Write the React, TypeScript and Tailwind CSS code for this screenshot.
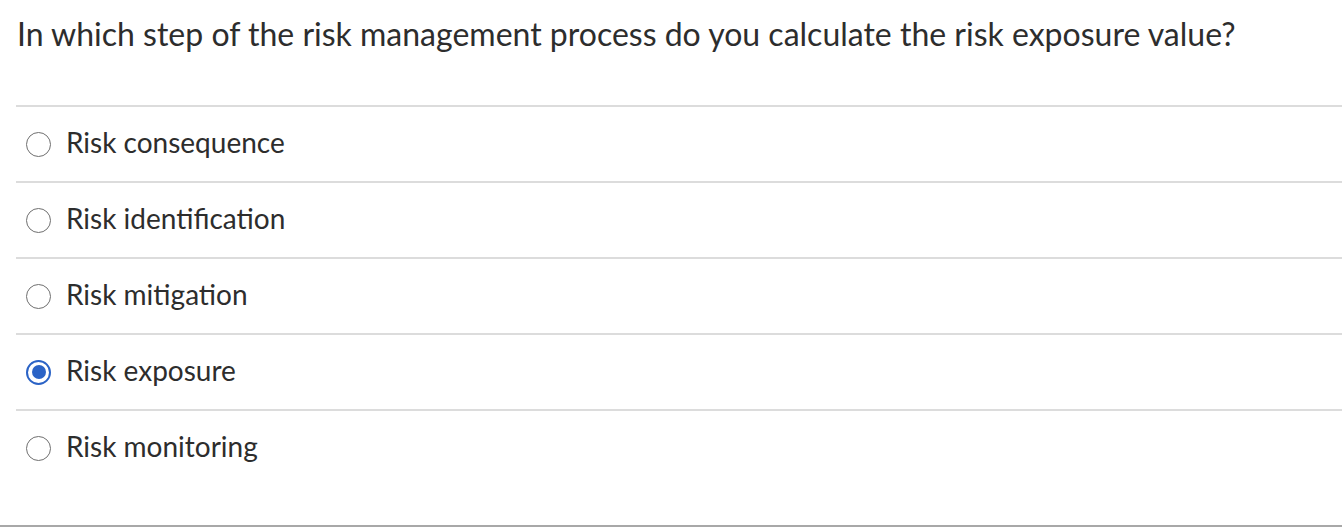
import { useState } from "react";

const options = [
  "Risk consequence",
  "Risk identification",
  "Risk mitigation",
  "Risk exposure",
  "Risk monitoring",
];

function Radio({ checked }: { checked: boolean }) {
  if (checked) {
    return (
      <span className="w-[25px] h-[25px] rounded-full border-[2.5px] border-[#2b63c6] flex items-center justify-center shrink-0">
        <span className="w-[14px] h-[14px] rounded-full bg-[#2b63c6]" />
      </span>
    );
  }
  return <span className="w-[25px] h-[25px] rounded-full border-[1.5px] border-[#6f6f6f] bg-white shrink-0" />;
}

export default function App() {
  const [picked, setPicked] = useState(3);
  return (
    <div className="w-[1342px] h-[530px] bg-white flex flex-col font-['Lato',sans-serif] text-[#2d2d2d]">
      <h1 className="pl-[17px] pt-[14px] text-[32px] leading-[40px] font-normal">
        In which step of the risk management process do you calculate the risk exposure value?
      </h1>
      <ul className="ml-4 mt-[51px]">
        {options.map((label, i) => (
          <li
            key={label}
            onClick={() => setPicked(i)}
            className="h-[76px] border-t-2 border-[#dcdcdc] flex items-center gap-[15px] pl-[10px] cursor-pointer"
          >
            <Radio checked={picked === i} />
            <span className="text-[28px] leading-none mb-[4px]">{label}</span>
          </li>
        ))}
      </ul>
      <div className="mt-auto mb-[3px] h-[2px] bg-[#a8a8a8]" />
    </div>
  );
}
